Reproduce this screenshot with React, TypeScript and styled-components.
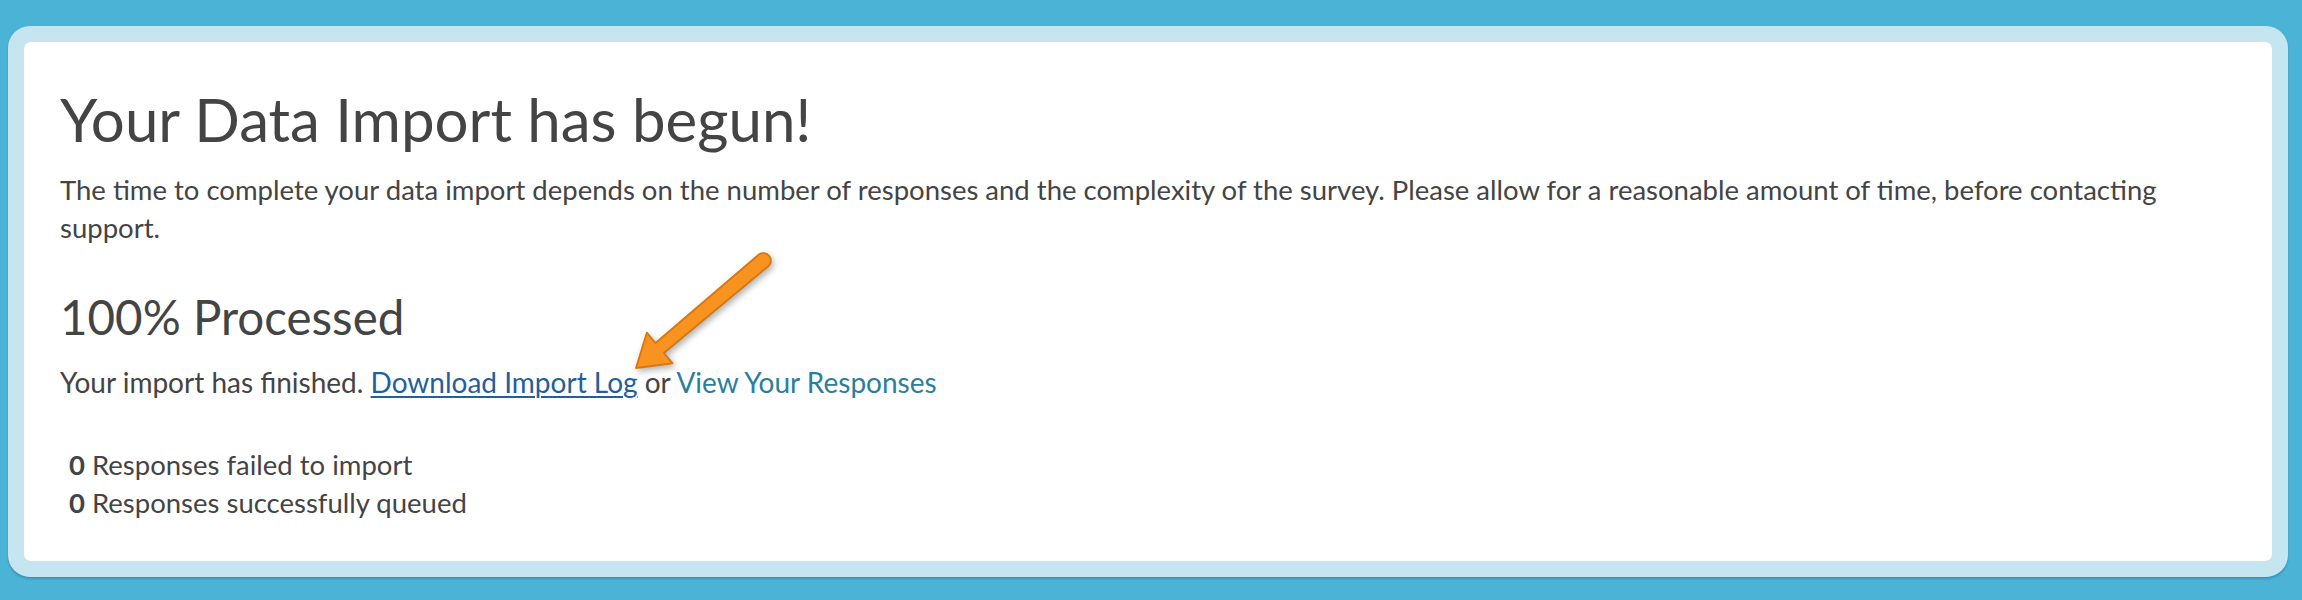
import * as React from "react";
import styled, { createGlobalStyle } from "styled-components";

const GlobalStyle = createGlobalStyle`
  html, body {
    margin: 0;
    padding: 0;
    background: #4bb3d6;
  }
  body {
    font-family: Lato, "Open Sans", sans-serif;
    color: #444444;
  }
`;

const Frame = styled.div`
  margin: 26px 14px 24px 8px;
  padding: 16px;
  background: #c5e6f0;
  border-radius: 22px;
  box-shadow: 0 2px 2px rgba(30, 90, 120, 0.35);
`;

const Panel = styled.section`
  position: relative;
  background: #ffffff;
  border-radius: 7px;
  padding: 44px 36px 39px 36px;
`;

const Title = styled.h1`
  margin: 0;
  font-size: 60px;
  line-height: 66px;
  font-weight: 400;
  color: #444444;
`;

const Text = styled.p<{ $gap?: number; $size?: number }>`
  margin: ${(p) => p.$gap ?? 0}px 0 0 0;
  font-size: ${(p) => p.$size ?? 27.5}px;
  line-height: 38px;
`;

const SubTitle = styled.h2`
  margin: 44px 0 0 0;
  font-size: 47.5px;
  line-height: 52px;
  font-weight: 400;
  color: #444444;
`;

const DownloadLink = styled.a`
  color: #235f9c;
  text-decoration: underline;
  text-underline-offset: 3px;
  text-decoration-thickness: 2px;
  cursor: pointer;
`;

const ViewLink = styled.a`
  color: #2b7f9b;
  text-decoration: none;
  cursor: pointer;
`;

const Stats = styled.ul`
  list-style: none;
  margin: 45px 0 0 0;
  padding: 0 0 0 9px;
  font-size: 27.5px;
  line-height: 38px;
`;

const StatItem = styled.li`
  b {
    font-weight: 700;
  }
`;

const Arrow = styled.svg`
  position: absolute;
  left: 596px;
  top: 198px;
  width: 170px;
  height: 150px;
  overflow: visible;
  filter: drop-shadow(2px 3px 3px rgba(0, 0, 0, 0.3));
`;

const stats = [
  { count: 0, label: "Responses failed to import" },
  { count: 0, label: "Responses successfully queued" },
];

const App: React.FC = () => {
  return (
    <>
      <GlobalStyle />
      <Frame>
        <Panel>
          <Title>Your Data Import has begun!</Title>
          <Text $gap={19}>
            The time to complete your data import depends on the number of
            responses and the complexity of the survey. Please allow for a
            reasonable amount of time, before contacting support.
          </Text>
          <SubTitle>100% Processed</SubTitle>
          <Text $gap={20} $size={28}>
            Your import has finished. <DownloadLink>Download Import Log</DownloadLink>{" "}
            or <ViewLink>View Your Responses</ViewLink>
          </Text>
          <Stats>
            {stats.map((s) => (
              <StatItem key={s.label}>
                <b>{s.count}</b> {s.label}
              </StatItem>
            ))}
          </Stats>
          <Arrow viewBox="0 0 170 150">
            <path
              d="M 16 128 L 26.8 92.7 L 35.5 103 L 139.2 14.3 A 7.5 7.5 0 0 1 148.8 25.7 L 43.9 113 L 52.6 123.3 Z"
              fill="#f7931e"
              stroke="#d6770f"
              strokeWidth="1.8"
              strokeLinejoin="round"
            />
          </Arrow>
        </Panel>
      </Frame>
    </>
  );
};

export default App;
